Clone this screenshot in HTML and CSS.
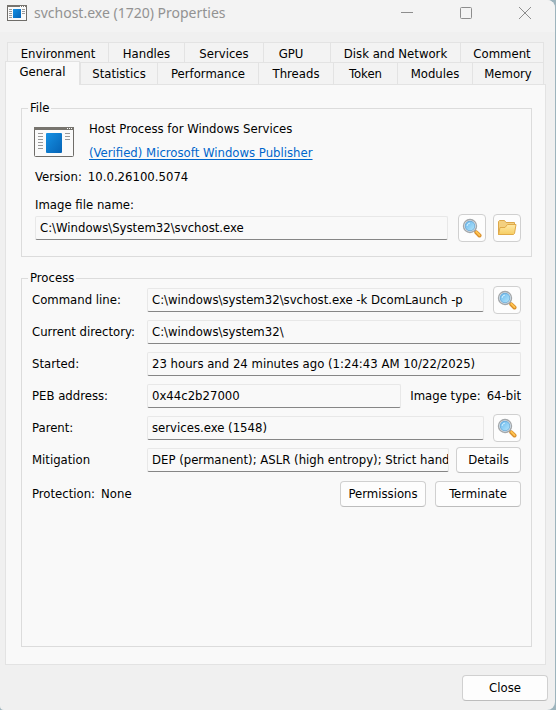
FILE: index.html
```html
<!DOCTYPE html>
<html lang="en">
<head>
<meta charset="utf-8">
<title>svchost.exe (1720) Properties</title>
<link rel="stylesheet" href="styles.css">
</head>
<body>
<svg class="defs" aria-hidden="true">
  <defs>
    <linearGradient id="blue" x1="0" y1="0" x2="1" y2="1"><stop offset="0" stop-color="#1591e4"/><stop offset="1" stop-color="#0663b5"/></linearGradient>
    <linearGradient id="glass" x1="0" y1="0" x2="1" y2="1"><stop offset="0" stop-color="#68b8ee"/><stop offset="1" stop-color="#b5e6fb"/></linearGradient>
    <linearGradient id="gold" x1="0" y1="0" x2="0" y2="1"><stop offset="0" stop-color="#ffe9a6"/><stop offset="1" stop-color="#f6cd62"/></linearGradient>
    <symbol id="app" viewBox="0 0 40 30">
      <rect x=".5" y=".5" width="39" height="29" rx="1" fill="#fafafa" stroke="#6f6d69"/>
      <path d="M0 1.500h40" stroke="#77746e" stroke-width="3"/>
      <path d="M33 1.500h1m1 0h1m1 0h1" stroke="#fff"/>
      <path d="M4 6.500h5m-5 3h5m-5 3h5m-5 3h5m-5 3h5m-5 3h5M31 6.500h5m-5 3h5m-5 3h5" stroke="#999"/>
      <rect x="12" y="6" width="16" height="20" rx="1" fill="url(#blue)"/>
    </symbol>
    <symbol id="lens" viewBox="0 0 20 20">
      <path d="M12.500 12.500l2 2" stroke="#8c8c8c" stroke-width="2"/>
      <path d="M14.300 14.300l3.200 3.200" stroke="#d98f2c" stroke-width="4" stroke-linecap="round"/>
      <path d="M14.300 13.900l3.200 3.200" stroke="#ffc451" stroke-width="2" stroke-linecap="round"/>
      <circle cx="8" cy="8" r="6.500" fill="#fff" stroke="#a3a7aa" stroke-width="1.400"/>
      <circle cx="8" cy="8" r="4.900" fill="url(#glass)" stroke="#5e9cca" stroke-width=".8"/>
      <path d="M5 8a3.400 3.400 0 0 1 3-3" fill="none" stroke="#d2f0ff" stroke-width="1"/>
    </symbol>
    <symbol id="folder" viewBox="0 0 20 20">
      <path d="M1.500 16.500v-13l1-1h5l1.500 2h8.500v3.500l-2 8.500z" fill="#f3d080" stroke="#dda84a"/>
      <path d="M1.500 16.500l1.500-7h5l2.500-3h8.500l-1.500 9-1 1z" fill="url(#gold)" stroke="#e0aa48"/>
    </symbol>
  </defs>
</svg>
<div class="window">
  <header class="titlebar">
    <svg class="title-icon" viewBox="0 0 20 16" aria-hidden="true">
      <rect x=".5" y=".5" width="19" height="15" fill="#fafafa" stroke="#6f6d69"/>
      <path d="M0 1h20" stroke="#77746e" stroke-width="2"/>
      <path d="M13 1.500h1m1 0h1m1 0h1" stroke="#fff"/>
      <path d="M2 4.500h3m-3 2h3m-3 2h3m-3 2h3m-3 2h3M15 4.500h3m-3 2h3m-3 2h3" stroke="#999"/>
      <rect x="6" y="4" width="8" height="9" fill="url(#blue)"/>
    </svg>
    <h1 class="title">svchost.exe (1720) Properties</h1>
    <div class="captions">
      <button class="caption" type="button" aria-label="Minimize"><svg viewBox="0 0 12 12"><path d="M0 5.500h12"/></svg></button>
      <button class="caption" type="button" aria-label="Maximize"><svg viewBox="0 0 12 12"><rect x=".5" y=".5" width="11" height="11" rx="1"/></svg></button>
      <button class="caption" type="button" aria-label="Close window"><svg viewBox="0 0 12 12"><path d="M0 0l12 12M12 0L0 12"/></svg></button>
    </div>
  </header>
  <main class="sheet">
    <div class="tabs" role="tablist">
      <div class="tab-row tab-row-back">
        <button class="tab" type="button" role="tab">Environment</button>
        <button class="tab" type="button" role="tab">Handles</button>
        <button class="tab" type="button" role="tab">Services</button>
        <button class="tab tab-start" type="button" role="tab">GPU</button>
        <button class="tab" type="button" role="tab">Disk and Network</button>
        <button class="tab" type="button" role="tab">Comment</button>
      </div>
      <div class="tab-row tab-row-front">
        <button class="tab tab-active" type="button" role="tab" aria-selected="true">General</button>
        <button class="tab" type="button" role="tab">Statistics</button>
        <button class="tab" type="button" role="tab">Performance</button>
        <button class="tab" type="button" role="tab">Threads</button>
        <button class="tab" type="button" role="tab">Token</button>
        <button class="tab" type="button" role="tab">Modules</button>
        <button class="tab" type="button" role="tab">Memory</button>
      </div>
    </div>
    <section class="panel" role="tabpanel">
      <fieldset class="group">
        <legend>File</legend>
        <div class="file">
          <div class="identity">
            <svg class="app-icon" aria-hidden="true"><use href="#app"/></svg>
            <div class="names">
              <span>Host Process for Windows Services</span>
              <a href="#">(Verified) Microsoft Windows Publisher</a>
            </div>
          </div>
          <div class="version"><span>Version:</span><span>10.0.26100.5074</span></div>
          <label class="image-label" for="image">Image file name:</label>
          <div class="row image-row">
            <input class="field" id="image" readonly value="C:\Windows\System32\svchost.exe">
            <button class="icon-button" type="button" aria-label="Inspect"><svg><use href="#lens"/></svg></button>
            <button class="icon-button" type="button" aria-label="Open folder"><svg><use href="#folder"/></svg></button>
          </div>
        </div>
      </fieldset>
      <fieldset class="group group-fill">
        <legend>Process</legend>
        <div class="process">
          <div class="row">
            <label class="name" for="cmd">Command line:</label>
            <input class="field" id="cmd" readonly value="C:\windows\system32\svchost.exe -k DcomLaunch -p">
            <button class="icon-button" type="button" aria-label="View command line"><svg><use href="#lens"/></svg></button>
          </div>
          <div class="row">
            <label class="name" for="dir">Current directory:</label>
            <input class="field" id="dir" readonly value="C:\windows\system32\">
          </div>
          <div class="row">
            <label class="name" for="started">Started:</label>
            <input class="field" id="started" readonly value="23 hours and 24 minutes ago (1:24:43 AM 10/22/2025)">
          </div>
          <div class="row">
            <label class="name" for="peb">PEB address:</label>
            <input class="field" id="peb" readonly value="0x44c2b27000">
            <div class="pair"><span>Image type:</span><span>64-bit</span></div>
          </div>
          <div class="row">
            <label class="name" for="parent">Parent:</label>
            <input class="field" id="parent" readonly value="services.exe (1548)">
            <button class="icon-button" type="button" aria-label="View parent"><svg><use href="#lens"/></svg></button>
          </div>
          <div class="row row-tight">
            <label class="name" for="mitigation">Mitigation</label>
            <input class="field" id="mitigation" readonly value="DEP (permanent); ASLR (high entropy); Strict hand">
            <button class="button button-small" type="button">Details</button>
          </div>
          <div class="row actions">
            <div class="pair protection"><span>Protection:</span><span>None</span></div>
            <button class="button" type="button">Permissions</button>
            <button class="button" type="button">Terminate</button>
          </div>
        </div>
      </fieldset>
    </section>
  </main>
  <footer class="footer"><button class="button" type="button">Close</button></footer>
</div>
</body>
</html>
```
FILE: styles.css
```css
* { box-sizing: border-box; }
body {
  margin: 0;
  background: #9db4bd;
  color: #000;
  font: 13px/18px "DejaVu Sans Condensed", "Noto Sans", sans-serif;
}
button, input { font: inherit; color: inherit; margin: 0; }
.defs { position: absolute; width: 0; height: 0; }
.window {
  display: flex;
  flex-direction: column;
  min-height: 100vh;
  margin-right: 1px;
  background: #f0f0f0;
  border-radius: 0 8px 8px 4px;
}
.titlebar {
  display: flex;
  align-items: center;
  height: 32px;
  padding: 0 1px 6px 7px;
  background: #f3f3f3;
  border-top-right-radius: 8px;
}
.title-icon { width: 20px; height: 16px; }
.title {
  flex: 1;
  margin: 0 0 0 7px;
  color: #929292;
  font: 14px/18px "Noto Sans", "Open Sans", sans-serif;
}
.captions { display: flex; }
.caption {
  display: grid;
  place-items: center;
  width: 59px;
  height: 26px;
  padding: 0;
  border: 0;
  background: none;
}
.caption svg {
  width: 12px;
  height: 12px;
  fill: none;
  stroke: #8d8d8d;
  overflow: visible;
}
.sheet {
  display: flex;
  flex: 1;
  flex-direction: column;
  padding: 10px 9px 0 5px;
}
.tab-row { display: grid; }
.tab-row-back {
  grid-template-columns: 101fr 76fr 79fr 67fr 130fr 84fr;
  margin: 0 2px;
}
.tab-row-front {
  grid-template-columns: 75fr 77fr 101fr 75fr 64fr 75fr 72fr;
  align-items: end;
  margin: -3px 2px 0 0;
}
.tab {
  height: 22px;
  padding: 0;
  border: solid #e3e3e3;
  border-width: 1px 0 0 1px;
  background: #f3f3f3;
  line-height: 20px;
}
.tab:last-child { border-right-width: 1px; }
.tab-start { padding-right: 12px; }
.tab-active {
  height: 24px;
  margin-bottom: -1px;
  padding-bottom: 3px;
  border-right-width: 1px;
  background: #f9f9f9;
  z-index: 1;
}
.panel {
  display: flex;
  flex: 1;
  flex-direction: column;
  gap: 12px;
  padding: 14px 13px 17px 15px;
  border: 1px solid #e3e3e3;
  background: #f9f9f9;
}
.group {
  min-width: 0;
  margin: 0;
  padding: 0;
  border: 1px solid #dcdcdc;
}
.group-fill { flex: 1; }
legend { margin-left: 6px; padding: 0 2px; }
.file { padding: 3px 10px 14px 13px; }
.identity { display: flex; gap: 15px; }
.app-icon { width: 40px; height: 30px; margin: 7px 0 0 -1px; }
.names { display: grid; gap: 6px; }
.names a { color: #0066cc; text-underline-offset: 2px; }
.version { display: flex; gap: 6px; margin-top: 6px; }
.image-label { display: block; margin-top: 10px; }
.row {
  display: flex;
  align-items: center;
  gap: 9px;
  height: 32px;
}
.row-tight { gap: 7px; }
.row-tight .name { width: 108px; }
.image-row { height: 28px; gap: 7px; }
.image-row .field { margin-right: 3px; }
.field {
  flex: 1;
  min-width: 0;
  height: 24px;
  padding: 0 0 1px 4px;
  border: 1px solid #e8e8e8;
  border-bottom-color: #868686;
  border-radius: 2px;
  background: #f9f9f9;
  outline: 0;
}
.icon-button {
  display: grid;
  place-items: center;
  width: 28px;
  height: 28px;
  padding: 0;
  border: 1px solid #d0d0d0;
  border-radius: 4px;
  background: #fdfdfd;
}
.icon-button svg { width: 20px; height: 20px; }
.process { padding: 0 10px; }
.process .row:first-child { margin-top: -3px; }
.name { width: 106px; }
.pair { display: flex; gap: 6px; }
.actions { height: 36px; }
.protection { flex: 1; }
.button {
  width: 86px;
  height: 26px;
  padding: 0;
  border: 1px solid #d0d0d0;
  border-bottom-color: #bdbdbd;
  border-radius: 4px;
  background: #fdfdfd;
}
.button-small { width: 65px; }
.footer {
  display: flex;
  justify-content: flex-end;
  padding: 10px 7px 9px;
}
```
